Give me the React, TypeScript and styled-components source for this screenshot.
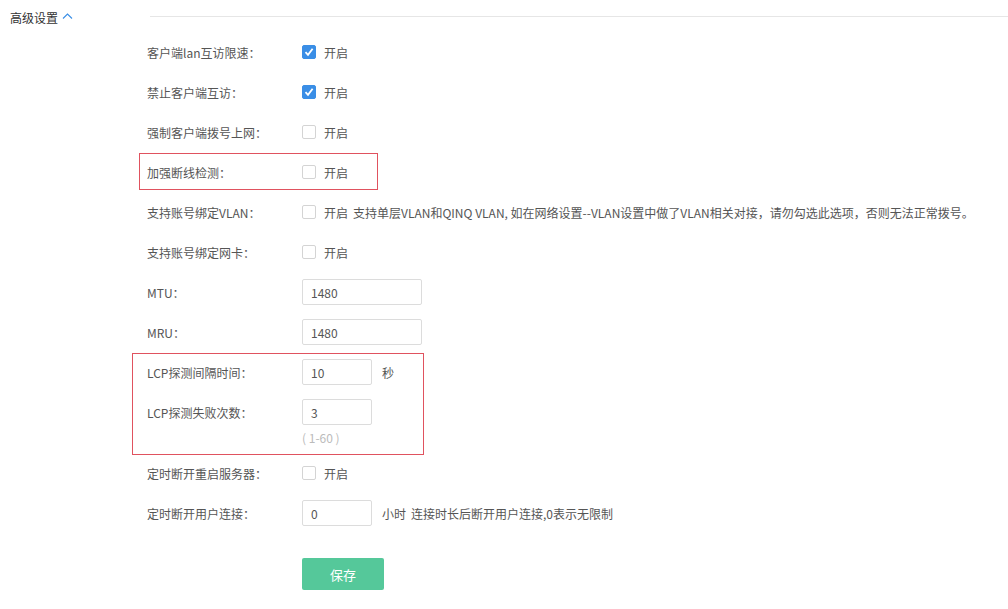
import styled, { createGlobalStyle } from "styled-components";

const GlobalStyle = createGlobalStyle`
  body {
    margin: 0;
    background: #fff;
    font-family: "Microsoft YaHei", "Noto Sans CJK SC", "Noto Sans", sans-serif;
    font-size: 12px;
    color: #555;
  }
`;

type Row =
  | { kind: "check"; label: string; checked?: boolean; note?: string }
  | { kind: "input"; label: string; value: string; short?: boolean; unit?: string; note?: string };

export default function App() {
  return (
    <>
      <GlobalStyle />
      <Page>
        <Header>
          <Title>高级设置</Title>
          <Chevron width="11" height="8" viewBox="0 0 11 8">
            <polyline points="1,6.5 5.5,2 10,6.5" fill="none" stroke="#3a8ee6" strokeWidth="1.1" />
          </Chevron>
          <Rule />
        </Header>

        <Form>
          <FieldRow row={{ kind: "check", label: "客户端lan互访限速：", checked: true }} />
          <FieldRow row={{ kind: "check", label: "禁止客户端互访：", checked: true }} />
          <FieldRow row={{ kind: "check", label: "强制客户端拨号上网：" }} />
          <Highlight top={1} bottom={2} left={-8} width={239}>
            <FieldRow row={{ kind: "check", label: "加强断线检测：" }} />
          </Highlight>
          <FieldRow
            row={{
              kind: "check",
              label: "支持账号绑定VLAN：",
              note: "支持单层VLAN和QINQ VLAN, 如在网络设置--VLAN设置中做了VLAN相关对接，请勿勾选此选项，否则无法正常拨号。",
            }}
          />
          <FieldRow row={{ kind: "check", label: "支持账号绑定网卡：" }} />
          <FieldRow row={{ kind: "input", label: "MTU：", value: "1480" }} />
          <FieldRow row={{ kind: "input", label: "MRU：", value: "1480" }} />
          <Highlight top={1} bottom={-2} left={-15} width={292}>
            <FieldRow row={{ kind: "input", label: "LCP探测间隔时间：", value: "10", short: true, unit: "秒" }} />
            <FieldRow row={{ kind: "input", label: "LCP探测失败次数：", value: "3", short: true }} />
            <Hint>( 1-60 )</Hint>
          </Highlight>
          <FieldRow row={{ kind: "check", label: "定时断开重启服务器：" }} />
          <FieldRow
            row={{
              kind: "input",
              label: "定时断开用户连接：",
              value: "0",
              short: true,
              unit: "小时",
              note: "连接时长后断开用户连接,0表示无限制",
            }}
          />
          <Actions>
            <SaveButton>保存</SaveButton>
          </Actions>
        </Form>
      </Page>
    </>
  );
}

function FieldRow({ row }: { row: Row }) {
  return (
    <RowWrap>
      <Label>{row.label}</Label>
      {row.kind === "check" ? (
        <Control>
          <Box checked={!!row.checked}>
            {row.checked && (
              <svg width="10" height="10" viewBox="0 0 10 10">
                <polyline points="1.5,5.2 4,7.8 8.6,1.8" fill="none" stroke="#fff" strokeWidth="1.8" />
              </svg>
            )}
          </Box>
          <span>开启</span>
          {row.note && <Note>{row.note}</Note>}
        </Control>
      ) : (
        <Control>
          <Input short={!!row.short} defaultValue={row.value} />
          {row.unit && <Unit>{row.unit}</Unit>}
          {row.note && <Note>{row.note}</Note>}
        </Control>
      )}
    </RowWrap>
  );
}

// STYLES

const Page = styled.div`
  width: 1008px;
  min-height: 609px;
`;

const Header = styled.div`
  display: flex;
  align-items: center;
  height: 34px;
  padding-left: 10px;
`;

const Title = styled.span`
  font-size: 12px;
  color: #333;
`;

const Chevron = styled.svg`
  margin-left: 4px;
  margin-top: -2px;
`;

const Rule = styled.div`
  flex: 1;
  height: 1px;
  background: #e6e6e6;
  margin-left: 77px;
  margin-top: -1px;
`;

const Form = styled.div`
  padding-left: 147px;
  margin-top: -2px;
`;

const RowWrap = styled.div`
  display: flex;
  align-items: center;
  height: 40px;
`;

const Label = styled.div`
  width: 155px;
  flex-shrink: 0;
  color: #555;
`;

const Control = styled.div`
  display: flex;
  align-items: center;
  white-space: nowrap;
  color: #555;
`;

const Box = styled.span<{ checked: boolean }>`
  display: inline-flex;
  align-items: center;
  justify-content: center;
  box-sizing: border-box;
  width: 14px;
  height: 14px;
  margin-right: 8px;
  border-radius: 2px;
  border: 1px solid ${(p) => (p.checked ? "#3a8ee6" : "#d4d4d4")};
  background: ${(p) => (p.checked ? "#3a8ee6" : "#fff")};
`;

const Note = styled.span`
  margin-left: 5px;
  color: #555;
`;

const Input = styled.input<{ short: boolean }>`
  box-sizing: border-box;
  width: ${(p) => (p.short ? "70px" : "120px")};
  height: 26px;
  padding: 0 8px;
  border: 1px solid #dcdcdc;
  border-radius: 2px;
  font-family: inherit;
  font-size: 12px;
  color: #555;
  outline: none;
`;

const Unit = styled.span`
  margin-left: 10px;
  color: #555;
`;

const Hint = styled.div`
  height: 21px;
  padding-left: 155px;
  line-height: 12px;
  color: #bbb;
`;

const Highlight = styled.div<{ top: number; bottom: number; left: number; width: number }>`
  position: relative;
  &::after {
    content: "";
    position: absolute;
    top: ${(p) => p.top}px;
    bottom: ${(p) => p.bottom}px;
    left: ${(p) => p.left}px;
    width: ${(p) => p.width}px;
    box-sizing: border-box;
    border: 1px solid #e0525f;
    pointer-events: none;
  }
`;

const Actions = styled.div`
  padding: 25px 0 0 155px;
`;

const SaveButton = styled.button`
  width: 82px;
  height: 32px;
  border: none;
  border-radius: 2px;
  background: #55c89a;
  color: #fff;
  font-family: inherit;
  font-size: 13px;
  cursor: pointer;
`;
